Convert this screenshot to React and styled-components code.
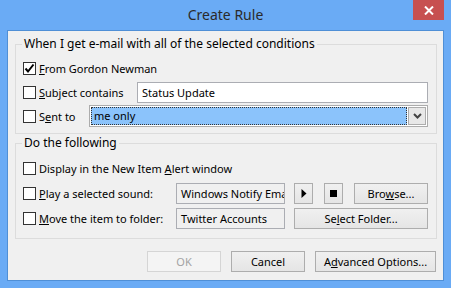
import React from "react";
import styled, { createGlobalStyle } from "styled-components";

const GlobalStyle = createGlobalStyle`
  body {
    margin: 0;
    background: #6aabf5;
    font-family: "Noto Sans", "Segoe UI", sans-serif;
    font-size: 11px;
    color: #000;
  }
`;

const Frame = styled.div`
  width: 451px;
  height: 288px;
  display: flex;
  flex-direction: column;
  box-sizing: border-box;
  padding: 0 7px 7px 7px;
`;

const TitleBar = styled.div`
  height: 30px;
  display: grid;
  grid-template-columns: 1fr auto 1fr;
  margin: 0 -7px;
`;

const Title = styled.div`
  grid-column: 2;
  font-size: 14px;
  color: #2a2a2a;
  line-height: 30px;
`;

const CloseButton = styled.div`
  grid-column: 3;
  justify-self: end;
  width: 31px;
  height: 20px;
  margin-right: 7px;
  background: #c75050;
  display: flex;
  align-items: center;
  justify-content: center;
`;

const Client = styled.div`
  flex: 1;
  background: #f0f0f0;
  border: 1px solid #4f8fd6;
  display: flex;
  flex-direction: column;
  padding: 13px 6px 0 7px;
`;

const Group = styled.div`
  border: 1px solid #dcdcdc;
  display: flex;
  flex-direction: column;
  padding: 0 8px ${(p) => p.$bottom}px 7px;
  margin-bottom: ${(p) => p.$gap || 0}px;
`;

const Legend = styled.div`
  align-self: flex-start;
  margin: -9px 0 ${(p) => p.$after}px -1px;
  padding: 0 2px;
  line-height: 16px;
  font-size: 12px;
  background: #f0f0f0;
`;

const Row = styled.div`
  height: ${(p) => p.$h}px;
  display: flex;
  align-items: center;
`;

const Check = styled.label`
  width: ${(p) => (p.$w ? `${p.$w}px` : "auto")};
  flex: none;
  display: flex;
  align-items: center;
  gap: 3px;
  white-space: nowrap;
`;

const Box = styled.span`
  width: 13px;
  height: 13px;
  box-sizing: border-box;
  border: 1px solid #333;
  background: #fff;
  display: flex;
  align-items: center;
  justify-content: center;
`;

const Key = styled.span`
  text-decoration: underline;
`;

const TextBox = styled.div`
  box-sizing: border-box;
  height: 21px;
  width: ${(p) => (p.$w ? `${p.$w}px` : "auto")};
  flex: ${(p) => (p.$w ? "none" : "1")};
  border: 1px solid #abadb3;
  background: ${(p) => (p.$ro ? "#f0f0f0" : "#fff")};
  padding: 0 4px;
  line-height: 19px;
  white-space: nowrap;
  overflow: hidden;
`;

const Combo = styled.div`
  flex: 1;
  height: 22px;
  box-sizing: border-box;
  border: 1px solid #acacac;
  background: #fff;
  padding: 1px;
  display: flex;
  gap: 1px;
`;

const ComboValue = styled.div`
  flex: 1;
  background: #8bc3fb;
  border: 1px dotted #333;
  line-height: 16px;
  padding: 0 2px;
`;

const ComboArrow = styled.div`
  width: 18px;
  box-sizing: border-box;
  border: 1px solid #adadad;
  background: #e8e8e8;
  display: flex;
  align-items: center;
  justify-content: center;
`;

const Button = styled.div`
  box-sizing: border-box;
  width: ${(p) => p.$w}px;
  height: 21px;
  margin-left: ${(p) => p.$ml || 0}px;
  flex: none;
  border: 1px solid ${(p) => (p.$disabled ? "#d5d5d5" : "#adadad")};
  background: ${(p) =>
    p.$disabled ? "#f4f4f4" : "linear-gradient(#f0f0f0, #e5e5e5)"};
  color: ${(p) => (p.$disabled ? "#a3a3a3" : "#000")};
  display: flex;
  align-items: center;
  justify-content: center;
  white-space: nowrap;
`;

const Footer = styled.div`
  display: flex;
  justify-content: flex-end;
  gap: 10px;
  margin-top: 12px;
  padding-right: 1px;
`;

const Tick = () => (
  <svg width="11" height="11" viewBox="0 0 11 11">
    <path d="M1.5 5.5 L4 8.5 L9.5 1.5" fill="none" stroke="#000" strokeWidth="2" />
  </svg>
);

export default function App() {
  return (
    <>
      <GlobalStyle />
      <Frame>
        <TitleBar>
          <Title>Create Rule</Title>
          <CloseButton>
            <svg width="10" height="9" viewBox="0 0 10 9">
              <path d="M1 0.5 L9 8.5 M9 0.5 L1 8.5" stroke="#fff" strokeWidth="2" />
            </svg>
          </CloseButton>
        </TitleBar>
        <Client>
          <Group $bottom={5} $gap={9}>
            <Legend $after={4}>When I get e-mail with all of the selected conditions</Legend>
            <Row $h={24}>
              <Check>
                <Box>
                  <Tick />
                </Box>
                <span>
                  <Key>F</Key>rom Gordon Newman
                </span>
              </Check>
            </Row>
            <Row $h={24}>
              <Check $w={114}>
                <Box />
                <span>
                  <Key>S</Key>ubject contains
                </span>
              </Check>
              <TextBox>Status Update</TextBox>
            </Row>
            <Row $h={24}>
              <Check $w={66}>
                <Box />
                <span>
                  S<Key>e</Key>nt to
                </span>
              </Check>
              <Combo>
                <ComboValue>me only</ComboValue>
                <ComboArrow>
                  <svg width="9" height="6" viewBox="0 0 9 6">
                    <path d="M1 1 L4.5 4.5 L8 1" fill="none" stroke="#444" strokeWidth="2" />
                  </svg>
                </ComboArrow>
              </Combo>
            </Row>
          </Group>
          <Group $bottom={7}>
            <Legend $after={5}>Do the following</Legend>
            <Row $h={25}>
              <Check>
                <Box />
                <span>
                  Display in the New Item <Key>A</Key>lert window
                </span>
              </Check>
            </Row>
            <Row $h={25}>
              <Check $w={153}>
                <Box />
                <span>
                  <Key>P</Key>lay a selected sound:
                </span>
              </Check>
              <TextBox $w={109} $ro>
                Windows Notify Email
              </TextBox>
              <Button $w={19} $ml={9}>
                <svg width="6" height="9" viewBox="0 0 6 9">
                  <path d="M0.5 0 L5.5 4.5 L0.5 9 Z" fill="#000" />
                </svg>
              </Button>
              <Button $w={19} $ml={11}>
                <svg width="7" height="7" viewBox="0 0 7 7">
                  <rect width="7" height="7" fill="#000" />
                </svg>
              </Button>
              <Button $w={74} $ml={11}>
                <span>
                  Bro<Key>w</Key>se...
                </span>
              </Button>
            </Row>
            <Row $h={25}>
              <Check $w={153}>
                <Box />
                <span>
                  <Key>M</Key>ove the item to folder:
                </span>
              </Check>
              <TextBox $w={109} $ro>
                Twitter Accounts
              </TextBox>
              <Button $w={134} $ml={9}>
                <span>
                  Se<Key>l</Key>ect Folder...
                </span>
              </Button>
            </Row>
          </Group>
          <Footer>
            <Button $w={74} $disabled>
              OK
            </Button>
            <Button $w={74}>Cancel</Button>
            <Button $w={121}>
              <span>
                A<Key>d</Key>vanced Options...
              </span>
            </Button>
          </Footer>
        </Client>
      </Frame>
    </>
  );
}
